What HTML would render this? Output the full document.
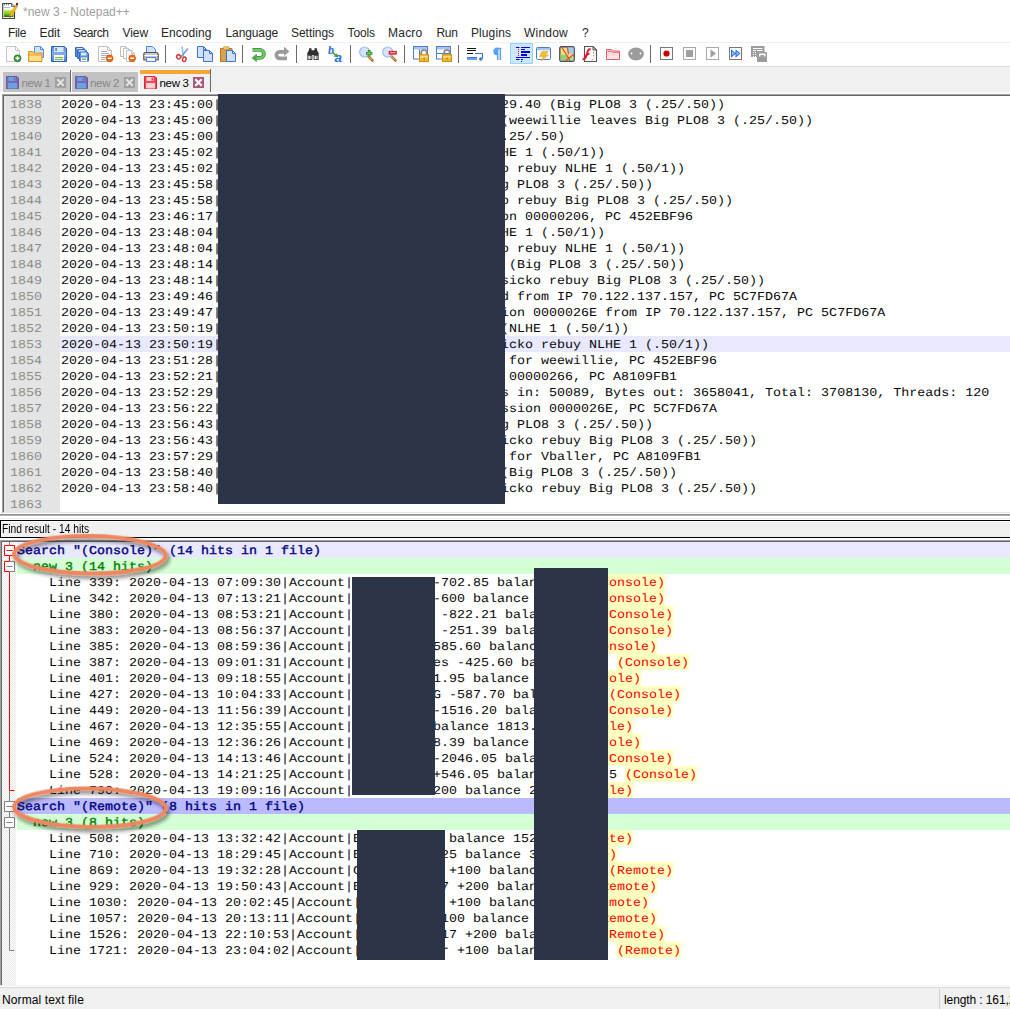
<!DOCTYPE html>
<html lang="en"><head><meta charset="utf-8"><title>*new 3 - Notepad++</title>
<style>
html,body{margin:0;padding:0;}
body{width:1010px;height:1009px;position:relative;overflow:hidden;background:#fff;font-family:"Liberation Sans",sans-serif;}
.abs{position:absolute;}
.mono{font-family:"Liberation Mono",monospace;font-size:12px;line-height:16px;white-space:pre;letter-spacing:0;text-rendering:geometricPrecision;transform:translateY(1px) scaleX(1.11111);transform-origin:0 0;}
#title{left:23px;top:4px;font-size:12px;line-height:16px;color:#a0a0a0;white-space:pre;}
.mi{top:25px;font-size:12px;line-height:16px;color:#262626;white-space:pre;}
.tab{top:72px;height:20px;background:#c2c2c2;}
.tab span{position:absolute;top:4px;font-size:11px;line-height:13px;color:#7a7a7a;white-space:pre;}
.ln{left:10px;color:#8c8c8c;}
.et{left:61px;color:#080808;}
.fl{left:17px;color:#080808;}
.hit{color:#ff0000;}
.hb{height:16px;background:#ffffbf;}
.red{background:#2b3547;}
</style></head><body>
<div class="abs" id="title">*new 3 - Notepad++</div>
<svg class="abs" style="left:0px;top:0px" width="20" height="22" viewBox="0 0 20 22"><defs><linearGradient id="tg" x1="0" y1="0" x2="0" y2="1"><stop offset="0" stop-color="#d8ec50"/><stop offset=".55" stop-color="#78c828"/><stop offset="1" stop-color="#0c6c10"/></linearGradient></defs><path d="M2.700 3.500h8.800l3 3v12h-11.800z" fill="#fff" stroke="#444" stroke-width="1.200"/><path d="M11.500 3.500v3h3" fill="#e8e8e8" stroke="#555" stroke-width=".8"/><path d="M4 4.800h1M6 4.800h1M8 4.800h1" stroke="#555" stroke-width="1"/><path d="M4 7.500h6" stroke="#9cc0e8" stroke-width="1"/><rect x="4" y="9.800" width="9.500" height="7.200" fill="url(#tg)"/><path d="M9.600 15.300l6-10.300 2 1.200-6 10.300-2.400 1.200z" fill="#f8b818" stroke="#d88c08" stroke-width=".5"/><path d="M15.500 5.700l.9-1.500 1.600 1-.9 1.500z" fill="#6c8cc0"/><rect x="16" y="3" width="2" height="2" fill="#a00010"/><path d="M9.800 15.500l-.4 2 2-1z" fill="#333"/></svg>

<div class="abs mi" style="left:8px;letter-spacing:-0.336px" id="m_File">File</div>
<div class="abs mi" style="left:39.5px;letter-spacing:-0.047px" id="m_Edit">Edit</div>
<div class="abs mi" style="left:73px;letter-spacing:-0.422px" id="m_Search">Search</div>
<div class="abs mi" style="left:122.5px;letter-spacing:-0.074px" id="m_View">View</div>
<div class="abs mi" style="left:161px;letter-spacing:0.057px" id="m_Encoding">Encoding</div>
<div class="abs mi" style="left:225.5px;letter-spacing:-0.111px" id="m_Language">Language</div>
<div class="abs mi" style="left:291px;letter-spacing:-0.045px" id="m_Settings">Settings</div>
<div class="abs mi" style="left:347.5px;letter-spacing:-0.103px" id="m_Tools">Tools</div>
<div class="abs mi" style="left:388px;letter-spacing:0.231px" id="m_Macro">Macro</div>
<div class="abs mi" style="left:436.5px;letter-spacing:-0.339px" id="m_Run">Run</div>
<div class="abs mi" style="left:471px;letter-spacing:0.092px" id="m_Plugins">Plugins</div>
<div class="abs mi" style="left:524px;letter-spacing:0.219px" id="m_Window">Window</div>
<div class="abs mi" style="left:582px;letter-spacing:-0.688px" id="m_q">?</div>
<div class="abs" style="left:0;top:42px;width:1010px;height:1px;background:#f0f0f0"></div>
<div class="abs" style="left:0;top:66px;width:1010px;height:1px;background:#dcdcdc"></div>
<div class="abs" style="left:510px;top:43px;width:21px;height:19px;background:#cce8ff;border:1px solid #99d1ff;box-sizing:content-box"></div>
<div class="abs" style="left:165px;top:45px;width:1px;height:18px;background:#6a6a6a"></div>
<div class="abs" style="left:242px;top:45px;width:1px;height:18px;background:#6a6a6a"></div>
<div class="abs" style="left:296px;top:45px;width:1px;height:18px;background:#6a6a6a"></div>
<div class="abs" style="left:350px;top:45px;width:1px;height:18px;background:#6a6a6a"></div>
<div class="abs" style="left:404px;top:45px;width:1px;height:18px;background:#6a6a6a"></div>
<div class="abs" style="left:458px;top:45px;width:1px;height:18px;background:#6a6a6a"></div>
<div class="abs" style="left:650px;top:45px;width:1px;height:18px;background:#6a6a6a"></div>
<svg class="abs" style="left:6px;top:46px" width="18" height="18" viewBox="0 0 18 18"><path d="M0.5 0.5h9l4 4v11h-13z" fill="#fdfdfd" stroke="#c4c4c4" stroke-width="1"/><path d="M9.5 0.5v4h4" fill="none" stroke="#c4c4c4" stroke-width="1"/><circle cx="11.5" cy="12.300" r="3.500" fill="#2e9a2e" stroke="#1c6e1c" stroke-width=".6"/><path d="M9.5 12.300h4M11.5 10.300v4" stroke="#fff" stroke-width="1.4"/></svg>
<svg class="abs" style="left:28px;top:46px" width="18" height="18" viewBox="0 0 18 18"><path d="M6.5 0.5h6l3 3v8h-9z" fill="#cfe2fb" stroke="#5b8fdc" stroke-width="1"/><path d="M12.5 0.5v3h3" fill="none" stroke="#5b8fdc" stroke-width="1"/><path d="M.5 15.5v-10h4.5l1.5 1.5h7.5v8.5z" fill="#f6c860" stroke="#e0922c" stroke-width="1"/><path d="M1.5 9.5h11.5v5.5h-11.5z" fill="#fbe08c"/><path d="M1 9h12.5" stroke="#e9a542" stroke-width="1"/></svg>
<svg class="abs" style="left:51px;top:46px" width="18" height="18" viewBox="0 0 18 18"><defs><linearGradient id="flg" x1="0" y1="0" x2="0" y2="1"><stop offset="0" stop-color="#5a8ee2"/><stop offset=".5" stop-color="#84aeee"/><stop offset="1" stop-color="#4a7ed8"/></linearGradient></defs><path d="M.5 .5h13l2 2v13h-15z" fill="url(#flg)" stroke="#2f5fc0" stroke-width="1"/><rect x="3" y="1" width="9.5" height="5" fill="#dbe8fb"/><rect x="4.5" y="2" width="1.2" height="3" fill="#2f5fc0"/><rect x="3" y="9" width="10" height="6" fill="#fff"/><rect x="4" y="11" width="8" height="1.2" fill="#74c044"/><rect x="4" y="13" width="8" height="1.2" fill="#74c044"/></svg>
<svg class="abs" style="left:74px;top:46px" width="18" height="18" viewBox="0 0 18 18"><g transform="translate(1 1)"><path d="M.5 .5h7.5l1.5 1.5v7.5h-9z" fill="#5b8ee0" stroke="#3a68c0" stroke-width="1"/><rect x="2" y="1" width="5.5" height="3" fill="#dbe8fb"/><rect x="2" y="6" width="6" height="3.5" fill="#fff"/><rect x="3" y="7" width="4" height="1.5" fill="#74c044"/></g><g transform="translate(3 3)"><path d="M.5 .5h7.5l1.5 1.5v7.5h-9z" fill="#5b8ee0" stroke="#3a68c0" stroke-width="1"/><rect x="2" y="1" width="5.5" height="3" fill="#dbe8fb"/><rect x="2" y="6" width="6" height="3.5" fill="#fff"/><rect x="3" y="7" width="4" height="1.5" fill="#74c044"/></g><g transform="translate(5 5.5)"><path d="M.5 .5h7.5l1.5 1.5v7.5h-9z" fill="#5b8ee0" stroke="#3a68c0" stroke-width="1"/><rect x="2" y="1" width="5.5" height="3" fill="#dbe8fb"/><rect x="2" y="6" width="6" height="3.5" fill="#fff"/><rect x="3" y="7" width="4" height="1.5" fill="#74c044"/></g></svg>
<svg class="abs" style="left:98px;top:46px" width="18" height="18" viewBox="0 0 18 18"><path d="M0.5 0.5h9l4 4v11h-13z" fill="#fdfdfd" stroke="#c0c0c0" stroke-width="1"/><path d="M9.5 0.5v4h4" fill="none" stroke="#c0c0c0" stroke-width="1"/><path d="M3 5.5h6M3 7.5h8M3 9.5h7M3 11.5h5M3 13.5h4" stroke="#b0b0b0" stroke-width="1"/><circle cx="11.6" cy="12.300" r="3.500" fill="#ee6a10" stroke="#c85000" stroke-width=".6"/><path d="M9.6 12.300h4" stroke="#fff" stroke-width="1.5"/></svg>
<svg class="abs" style="left:120px;top:46px" width="18" height="18" viewBox="0 0 18 18"><path d="M0.5 0.5h5l3 3v7h-8z" fill="#fdfdfd" stroke="#c0c0c0" stroke-width="1"/><path d="M5.5 0.5v3h3" fill="none" stroke="#c0c0c0" stroke-width="1"/><path d="M3.5 2.5h5l3 3v7h-8z" fill="#fdfdfd" stroke="#c0c0c0" stroke-width="1"/><path d="M8.5 2.5v3h3" fill="none" stroke="#c0c0c0" stroke-width="1"/><path d="M6.5 4.5h5l3 3v8h-8z" fill="#fdfdfd" stroke="#c0c0c0" stroke-width="1"/><path d="M11.5 4.5v3h3" fill="none" stroke="#c0c0c0" stroke-width="1"/><circle cx="12.2" cy="12.300" r="3.400" fill="#ee6a10" stroke="#c85000" stroke-width=".6"/><path d="M10.3 12.300h3.8" stroke="#fff" stroke-width="1.5"/></svg>
<svg class="abs" style="left:143px;top:46px" width="18" height="18" viewBox="0 0 18 18"><path d="M3.5 7v-6.5h6l3 3v3.5z" fill="#cfe2fb" stroke="#4a86e0" stroke-width="1"/><path d="M.8 14v-5.5q0-2 2-2h10.4q2 0 2 2v5.5z" fill="#c9c9c9" stroke="#555" stroke-width="1.2"/><path d="M1.5 9.5h13" stroke="#fff" stroke-width="1"/><rect x="3.5" y="11.5" width="9" height="4" fill="#fafafa" stroke="#4a86e0" stroke-width="1"/></svg>
<svg class="abs" style="left:175px;top:46px" width="18" height="18" viewBox="0 0 18 18"><path d="M7 .5l1.600 11" stroke="#9cbce8" stroke-width="1.600" fill="none"/><path d="M13 2.500l-7.500 9" stroke="#6a9cdc" stroke-width="1.500" fill="none"/><ellipse cx="3.600" cy="10.800" rx="1.900" ry="2.100" fill="none" stroke="#d23a3a" stroke-width="1.500" transform="rotate(-40 3.600 10.800)"/><ellipse cx="9.300" cy="13.300" rx="1.700" ry="2.300" fill="none" stroke="#d23a3a" stroke-width="1.500" transform="rotate(15 9.300 13.300)"/></svg>
<svg class="abs" style="left:197px;top:46px" width="18" height="18" viewBox="0 0 18 18"><path d="M0.5 0.5h6l3 3v8h-9z" fill="#cfe0fa" stroke="#3f74d4" stroke-width="1"/><path d="M6.5 0.5v3h3" fill="none" stroke="#3f74d4" stroke-width="1"/><path d="M6.5 4.5h6l3 3v8h-9z" fill="#cfe0fa" stroke="#3f74d4" stroke-width="1"/><path d="M12.5 4.5v3h3" fill="none" stroke="#3f74d4" stroke-width="1"/></svg>
<svg class="abs" style="left:220px;top:46px" width="18" height="18" viewBox="0 0 18 18"><path d="M.5 2.5h11.5v13h-11.5z" fill="#d9a050" stroke="#b87828" stroke-width="1"/><rect x="3.5" y=".8" width="5.5" height="2.6" rx=".8" fill="#f5d070" stroke="#c08830" stroke-width=".8"/><path d="M6.5 4.5h6l3 3v8h-9z" fill="#cfe0fa" stroke="#3f74d4" stroke-width="1"/><path d="M12.5 4.5v3h3" fill="none" stroke="#3f74d4" stroke-width="1"/></svg>
<svg class="abs" style="left:251px;top:46px" width="18" height="18" viewBox="0 0 18 18"><path d="M1.500 3.900h7.400a4 4 0 0 1 0 8h-3.400" fill="none" stroke="#3a9a3a" stroke-width="3.800"/><path d="M2 3.900h6.900a4 4 0 0 1 0 8h-3.400" fill="none" stroke="#76c866" stroke-width="2"/><path d="M.6 11.900l5.200-4.300v8.600z" fill="#4aa84a"/></svg>
<svg class="abs" style="left:274px;top:46px" width="18" height="18" viewBox="0 0 18 18"><path d="M10 5.800h-4.300a3.300 3.300 0 0 0 0 6.600h7.300" fill="none" stroke="#9a9a9a" stroke-width="3.800"/><path d="M15.400 5.400l-5.400-4.600v9.200z" fill="#9a9a9a"/></svg>
<svg class="abs" style="left:305px;top:46px" width="18" height="18" viewBox="0 0 18 18"><path d="M4 2.200h2.500v2h3v-2h2.500v2l1.700 2.800v7h-5v-5h-1.400v5h-5v-7l1.700-2.800z" fill="#303030"/><rect x="2.300" y="9.800" width="5" height="3.400" fill="#8c8c8c"/><rect x="8.700" y="9.800" width="5" height="3.400" fill="#8c8c8c"/><rect x="3.600" y="9.800" width="1.300" height="3.400" fill="#e8e8e8"/><rect x="10" y="9.800" width="1.300" height="3.400" fill="#e8e8e8"/></svg>
<svg class="abs" style="left:328px;top:46px" width="18" height="18" viewBox="0 0 18 18"><text x="0" y="8" font-family="Liberation Serif,serif" font-style="italic" font-weight="bold" font-size="12" fill="#2f6fdc">b</text><text x="6.500" y="15.600" font-family="Liberation Sans,sans-serif" font-style="italic" font-weight="bold" font-size="13.500" fill="#2f6fdc">a</text><path d="M4.500 6l3.500 3.500" stroke="#3ca03c" stroke-width="1.500"/><path d="M9.800 11.300l-4-.8 3.200-3.200z" fill="#3ca03c"/></svg>
<svg class="abs" style="left:359px;top:46px" width="18" height="18" viewBox="0 0 18 18"><path d="M8.5 9.500l5 5" stroke="#b07830" stroke-width="2.6" stroke-linecap="round"/><path d="M8.500 9.500l4.500 4.500" stroke="#e0b070" stroke-width="1"/><circle cx="5.700" cy="6" r="5" fill="#d4e4fa" stroke="#9cbcf0" stroke-width="1.200"/><path d="M7 7.300h6.400M10.200 4.100v6.400" stroke="#2c8c2c" stroke-width="2.800"/><path d="M7.600 7.300h5.200M10.200 4.700v5.200" stroke="#6cc45c" stroke-width="1.200"/></svg>
<svg class="abs" style="left:382px;top:46px" width="18" height="18" viewBox="0 0 18 18"><path d="M8.5 9.500l5 5" stroke="#b07830" stroke-width="2.6" stroke-linecap="round"/><path d="M8.500 9.500l4.500 4.500" stroke="#e0b070" stroke-width="1"/><circle cx="5.700" cy="6" r="5" fill="#d4e4fa" stroke="#9cbcf0" stroke-width="1.200"/><rect x="7" y="5.200" width="7.400" height="3" fill="#f02828" stroke="#c01010" stroke-width=".600"/><rect x="8" y="6.200" width="5.400" height="1" fill="#ffb0b0"/></svg>
<svg class="abs" style="left:413px;top:46px" width="18" height="18" viewBox="0 0 18 18"><rect x=".5" y=".5" width="14" height="12.500" fill="#fff" stroke="#4a7cd0" stroke-width="1"/><rect x="1" y="1" width="13" height="2.500" fill="#a8c4f0"/><path d="M6.500 3.500v9.500" stroke="#4a7cd0" stroke-width="1"/><path d="M8.300 9v-2.400a2.700 2.700 0 0 1 5.400 0v2.400" fill="none" stroke="#8c8c8c" stroke-width="1.800"/><rect x="6.500" y="8.800" width="9" height="6.700" fill="#f2b830" stroke="#d08c10" stroke-width="1"/><rect x="7.500" y="9.800" width="7" height="2" fill="#fbe08c"/><rect x="10.500" y="11.500" width="1.200" height="2" fill="#b07810"/></svg>
<svg class="abs" style="left:436px;top:46px" width="18" height="18" viewBox="0 0 18 18"><rect x=".5" y=".5" width="14" height="12.500" fill="#fff" stroke="#4a7cd0" stroke-width="1"/><rect x="1" y="1" width="13" height="2.500" fill="#a8c4f0"/><path d="M.5 7.500h14" stroke="#4a7cd0" stroke-width="1"/><path d="M8.300 9v-2.400a2.700 2.700 0 0 1 5.400 0v2.400" fill="none" stroke="#8c8c8c" stroke-width="1.800"/><rect x="6.500" y="8.800" width="9" height="6.700" fill="#f2b830" stroke="#d08c10" stroke-width="1"/><rect x="7.500" y="9.800" width="7" height="2" fill="#fbe08c"/><rect x="10.500" y="11.500" width="1.200" height="2" fill="#b07810"/></svg>
<svg class="abs" style="left:467px;top:46px" width="18" height="18" viewBox="0 0 18 18"><path d="M0 2.500h9M0 4.500h9M0 7.500h6" stroke="#111" stroke-width="1.100"/><rect x="0" y="11" width="10" height="3" fill="#6aa0ec"/><path d="M0 11.500h10" stroke="#3f74d4" stroke-width="1"/><path d="M8 7.500h7.500v5.500h-2.500" fill="none" stroke="#3f74d4" stroke-width="1.100"/><path d="M11.500 13l3-2.500v5z" fill="#3f74d4"/></svg>
<svg class="abs" style="left:490px;top:46px" width="18" height="18" viewBox="0 0 18 18"><path d="M5 2.600h6.500M7.700 2.600v11.400M10.300 2.600v11.400" stroke="#5aa2f2" stroke-width="1.500" fill="none"/><path d="M7 2.600a2.900 2.900 0 0 0 0 5.800z" fill="#5aa2f2" stroke="#5aa2f2" stroke-width="1.500"/></svg>
<svg class="abs" style="left:513px;top:46px" width="18" height="18" viewBox="0 0 18 18"><path d="M3 1.500h3.500M8 1.500h9M3 11.500h14M3 13.500h3.500M8 13.500h2" stroke="#0000e6" stroke-width="1"/><path d="M8 3.500h4" stroke="#0000e6" stroke-width="1"/><rect x="8" y="5" width="9" height="2" fill="#0000e6"/><rect x="8" y="8" width="6" height="2" fill="#0000e6"/><rect x="5" y="3" width="1" height="1" fill="#f00"/><rect x="5" y="5" width="1" height="1" fill="#f00"/><rect x="5" y="7" width="1" height="1" fill="#f00"/><rect x="5" y="9" width="1" height="1" fill="#f00"/><rect x="8" y="15" width="1" height="1" fill="#0000e6"/></svg>
<svg class="abs" style="left:536px;top:46px" width="18" height="18" viewBox="0 0 18 18"><rect x=".5" y="1.500" width="14" height="12" rx="1" fill="#f4f8ff" stroke="#4a7cd0" stroke-width="1"/><rect x="1" y="2" width="13" height="2.200" fill="#a8c4f0"/><path d="M6 5.500h6l-2.500 3.500h3l-7.500 6 2.500-4.500h-4z" fill="#f2c030" stroke="#e0a820" stroke-width=".600"/></svg>
<svg class="abs" style="left:559px;top:46px" width="18" height="18" viewBox="0 0 18 18"><rect x=".8" y=".8" width="14.400" height="14.400" rx="1.500" fill="#e8e070" stroke="#4a4a6a" stroke-width="1.400"/><rect x="8" y="1.500" width="6.500" height="6" fill="#a8c8f0"/><rect x="1.500" y="9" width="8" height="5.500" fill="#90d070"/><rect x="9.500" y="11" width="5" height="3.500" fill="#b0dc90"/><path d="M3 1.500l8 13M14.500 8.500l-7.500 6M8.500 1.500l1 6.500" stroke="#f04030" stroke-width="1.100" fill="none"/></svg>
<svg class="abs" style="left:582px;top:46px" width="18" height="18" viewBox="0 0 18 18"><path d="M2.500 .5h8.500l3.500 3.500v11.500h-12z" fill="#fdfdf8" stroke="#555" stroke-width="1.100"/><path d="M11 .5v3.500h3.500" fill="none" stroke="#555" stroke-width="1"/><path d="M11.500 6v1.500M11.500 9v1.500M11.500 12.500q-.5 1.500-2 1.500" stroke="#999" stroke-width="1" fill="none"/><path d="M8.800 3.400q-2.200-.8-3 1.800l-2 6.200q-.8 2-3.300 1.800" fill="none" stroke="#e02030" stroke-width="2"/><path d="M2 10.500l5.500-3" stroke="#e02030" stroke-width="1.500"/></svg>
<svg class="abs" style="left:606px;top:46px" width="18" height="18" viewBox="0 0 18 18"><defs><linearGradient id="fg" x1="0" y1="0" x2="0" y2="1"><stop offset="0" stop-color="#f4c4c8"/><stop offset="1" stop-color="#fdf0f0"/></linearGradient></defs><path d="M.5 13.500v-10h5l1 1.500h7v8.500z" fill="url(#fg)" stroke="#dc5c64" stroke-width="1"/><path d="M1.500 5.500h4.500l1 1h6" stroke="#e88088" stroke-width="1" fill="none"/></svg>
<svg class="abs" style="left:628px;top:46px" width="18" height="18" viewBox="0 0 18 18"><ellipse cx="8" cy="8" rx="7.900" ry="6.400" fill="#9c9c9c"/><circle cx="3.500" cy="7.500" r=".9" fill="#fff"/><circle cx="12.500" cy="7.500" r=".9" fill="#fff"/></svg>
<svg class="abs" style="left:660px;top:47px" width="18" height="18" viewBox="0 0 18 18"><rect x=".5" y=".5" width="12" height="12" fill="#fff" stroke="#777" stroke-width="1"/><circle cx="6.500" cy="6.500" r="3.100" fill="#c80000"/></svg>
<svg class="abs" style="left:683px;top:47px" width="18" height="18" viewBox="0 0 18 18"><rect x=".5" y=".5" width="12" height="12" fill="#fff" stroke="#a8a8a8" stroke-width="1"/><rect x="3" y="3" width="7" height="7" fill="#a0a0a0"/></svg>
<svg class="abs" style="left:706px;top:47px" width="18" height="18" viewBox="0 0 18 18"><rect x=".5" y=".5" width="12" height="12" fill="#fff" stroke="#a8a8a8" stroke-width="1"/><path d="M4.500 2.300l5.500 4.200-5.500 4.200z" fill="#a0a0a0"/></svg>
<svg class="abs" style="left:729px;top:47px" width="18" height="18" viewBox="0 0 18 18"><rect x=".5" y=".5" width="12" height="12" fill="#fff" stroke="#777" stroke-width="1"/><path d="M2 2.300l5 4.200-5 4.200zM6.500 2.300l5 4.200-5 4.200z" fill="#2868e0"/><path d="M3 4.300l2.700 2.200-2.700 2.200zM7.500 4.300l2.700 2.200-2.700 2.200z" fill="#8cbcfa"/></svg>
<svg class="abs" style="left:751px;top:46px" width="18" height="18" viewBox="0 0 18 18"><rect x="0" y="0" width="13.500" height="11" fill="#9c9c9c"/><rect x="6" y="6" width="10" height="10" fill="#9c9c9c"/><rect x="2" y="2" width="9.500" height="1" fill="#fff"/><rect x="2" y="4" width="3" height="1" fill="#fff"/><rect x="6" y="4" width="5.500" height="1" fill="#fff"/><rect x="2" y="6" width="1" height="1" fill="#fff"/><rect x="4" y="6" width="1" height="1" fill="#fff"/><rect x="2" y="8" width="1" height="1" fill="#fff"/><rect x="4" y="8" width="1" height="1" fill="#fff"/><rect x="2" y="10" width="1" height="1" fill="#fff"/><rect x="4" y="10" width="1" height="1" fill="#fff"/><path d="M8 7.500h6.500v3h-1.500v-1.500h-3.500v1.500h-1.500z" fill="#fff"/></svg>

<div class="abs" style="left:0;top:67px;width:1010px;height:27px;background:#f0f0f0"></div>
<div class="abs" style="left:3px;top:72px;width:67px;height:20px;background:#c2c2c2"></div>
<div class="abs" style="left:70px;top:70px;width:1px;height:22px;background:#696969"></div>
<div class="abs" style="left:3px;top:71px;width:67px;height:1px;background:#f8f8f8"></div>
<div class="abs" style="left:2px;top:71px;width:1px;height:21px;background:#f8f8f8"></div>
<div class="abs" style="left:72px;top:71px;width:66px;height:1px;background:#f8f8f8"></div>
<div class="abs" style="left:71px;top:71px;width:1px;height:21px;background:#f8f8f8"></div>
<div class="abs" style="left:138px;top:72px;width:1px;height:20px;background:#f8f8f8"></div>
<div class="abs" style="left:72px;top:72px;width:66px;height:20px;background:#c2c2c2"></div>
<div class="abs" style="left:139px;top:69px;width:71px;height:1px;background:#fbfbfb"></div>
<div class="abs" style="left:139px;top:69px;width:1px;height:23px;background:#fbfbfb"></div>
<div class="abs" style="left:140px;top:70px;width:70px;height:4px;background:#f9a436"></div>
<div class="abs" style="left:140px;top:74px;width:70px;height:19px;background:#f0f0f0"></div>
<div class="abs" style="left:210px;top:69px;width:1px;height:23px;background:#696969"></div>
<svg class="abs" style="left:6px;top:76px" width="13" height="13" viewBox="0 0 13 13"><path d="M.5 .5h10.500l1.500 1.500v10.500h-12z" fill="#7a68b4" stroke="#6c58a4" stroke-width="1"/><rect x="2.500" y="1" width="7" height="4" fill="#68a4e4"/><rect x="7.500" y="1.500" width="1.500" height="3" fill="#7a68b4"/><rect x="2" y="7" width="9" height="5.500" fill="#68a4e4"/></svg>
<svg class="abs" style="left:75px;top:76px" width="13" height="13" viewBox="0 0 13 13"><path d="M.5 .5h10.500l1.500 1.500v10.500h-12z" fill="#7a68b4" stroke="#6c58a4" stroke-width="1"/><rect x="2.500" y="1" width="7" height="4" fill="#68a4e4"/><rect x="7.500" y="1.500" width="1.500" height="3" fill="#7a68b4"/><rect x="2" y="7" width="9" height="5.500" fill="#68a4e4"/></svg>
<svg class="abs" style="left:144px;top:76px" width="13" height="13" viewBox="0 0 13 13"><path d="M.5 .5h10.500l1.500 1.500v10.500h-12z" fill="#f04858" stroke="#d02838" stroke-width="1"/><rect x="2.500" y="1" width="7" height="4" fill="#fbd0d4"/><rect x="7.500" y="1.500" width="1.500" height="3" fill="#f04858"/><rect x="2" y="7" width="9" height="5.500" fill="#fbd0d4"/></svg>
<div class="abs tabt" style="left:21.5px;top:76px;font-size:11.5px;line-height:14px;color:#868686;white-space:pre;letter-spacing:-0.3px">new 1</div>
<div class="abs tabt" style="left:90px;top:76px;font-size:11.5px;line-height:14px;color:#868686;white-space:pre;letter-spacing:-0.3px">new 2</div>
<div class="abs tabt" style="left:159.5px;top:76px;font-size:11.5px;line-height:14px;color:#000;white-space:pre;letter-spacing:-0.3px">new 3</div>
<svg class="abs" style="left:55px;top:77px" width="11" height="11" viewBox="0 0 11 11"><rect x="0" y="0" width="11" height="11" fill="#a0a0a0"/><path d="M2.300 2.300l6.400 6.400M8.700 2.300l-6.400 6.400" stroke="#e4e4e4" stroke-width="2"/></svg>
<svg class="abs" style="left:124px;top:77px" width="11" height="11" viewBox="0 0 11 11"><rect x="0" y="0" width="11" height="11" fill="#a0a0a0"/><path d="M2.300 2.300l6.400 6.400M8.700 2.300l-6.400 6.400" stroke="#e4e4e4" stroke-width="2"/></svg>
<svg class="abs" style="left:193px;top:77px" width="11" height="11" viewBox="0 0 11 11"><rect x="0" y="0" width="11" height="11" fill="#a85a7a"/><path d="M2.300 2.300l6.400 6.400M8.700 2.300l-6.400 6.400" stroke="#fff" stroke-width="2"/></svg>

<div class="abs" style="left:0;top:92px;width:1010px;height:2px;background:#fbfbfb"></div>
<div class="abs" style="left:0;top:94px;width:2px;height:420px;background:#fff"></div>
<div class="abs" style="left:2px;top:94px;width:1008px;height:419px;background:#a0a0a0"></div>
<div class="abs" style="left:3px;top:95px;width:1007px;height:418px;background:#696969"></div>
<div class="abs" style="left:4px;top:96px;width:1006px;height:416px;background:#fff"></div>
<div class="abs" style="left:4px;top:96px;width:56px;height:416px;background:#e4e4e4"></div>
<div class="abs" style="left:3px;top:512px;width:1007px;height:1px;background:#e3e3e3"></div>
<div class="abs" style="left:2px;top:513px;width:1008px;height:1px;background:#fff"></div>
<div class="abs" style="left:60px;top:336px;width:950px;height:16px;background:#e8e8ff"></div>
<div class="abs mono ln" style="top:96px">1838</div><div class="abs mono et" style="top:96px">2020-04-13 23:45:00|                                   29.40 (Big PLO8 3 (.25/.50))</div>
<div class="abs mono ln" style="top:112px">1839</div><div class="abs mono et" style="top:112px">2020-04-13 23:45:00|                                   (weewillie leaves Big PLO8 3 (.25/.50))</div>
<div class="abs mono ln" style="top:128px">1840</div><div class="abs mono et" style="top:128px">2020-04-13 23:45:00|                                   .25/.50)</div>
<div class="abs mono ln" style="top:144px">1841</div><div class="abs mono et" style="top:144px">2020-04-13 23:45:02|                                   HE 1 (.50/1))</div>
<div class="abs mono ln" style="top:160px">1842</div><div class="abs mono et" style="top:160px">2020-04-13 23:45:02|                                   o rebuy NLHE 1 (.50/1))</div>
<div class="abs mono ln" style="top:176px">1843</div><div class="abs mono et" style="top:176px">2020-04-13 23:45:58|                                   g PLO8 3 (.25/.50))</div>
<div class="abs mono ln" style="top:192px">1844</div><div class="abs mono et" style="top:192px">2020-04-13 23:45:58|                                   o rebuy Big PLO8 3 (.25/.50))</div>
<div class="abs mono ln" style="top:208px">1845</div><div class="abs mono et" style="top:208px">2020-04-13 23:46:17|                                   on 00000206, PC 452EBF96</div>
<div class="abs mono ln" style="top:224px">1846</div><div class="abs mono et" style="top:224px">2020-04-13 23:48:04|                                   HE 1 (.50/1))</div>
<div class="abs mono ln" style="top:240px">1847</div><div class="abs mono et" style="top:240px">2020-04-13 23:48:04|                                   o rebuy NLHE 1 (.50/1))</div>
<div class="abs mono ln" style="top:256px">1848</div><div class="abs mono et" style="top:256px">2020-04-13 23:48:14|                                    (Big PLO8 3 (.25/.50))</div>
<div class="abs mono ln" style="top:272px">1849</div><div class="abs mono et" style="top:272px">2020-04-13 23:48:14|                                   sicko rebuy Big PLO8 3 (.25/.50))</div>
<div class="abs mono ln" style="top:288px">1850</div><div class="abs mono et" style="top:288px">2020-04-13 23:49:46|                                   d from IP 70.122.137.157, PC 5C7FD67A</div>
<div class="abs mono ln" style="top:304px">1851</div><div class="abs mono et" style="top:304px">2020-04-13 23:49:47|                                   ion 0000026E from IP 70.122.137.157, PC 5C7FD67A</div>
<div class="abs mono ln" style="top:320px">1852</div><div class="abs mono et" style="top:320px">2020-04-13 23:50:19|                                   (NLHE 1 (.50/1))</div>
<div class="abs mono ln" style="top:336px">1853</div><div class="abs mono et" style="top:336px">2020-04-13 23:50:19|                                   icko rebuy NLHE 1 (.50/1))</div>
<div class="abs mono ln" style="top:352px">1854</div><div class="abs mono et" style="top:352px">2020-04-13 23:51:28|                                    for weewillie, PC 452EBF96</div>
<div class="abs mono ln" style="top:368px">1855</div><div class="abs mono et" style="top:368px">2020-04-13 23:52:21|                                    00000266, PC A8109FB1</div>
<div class="abs mono ln" style="top:384px">1856</div><div class="abs mono et" style="top:384px">2020-04-13 23:52:29|                                   s in: 50089, Bytes out: 3658041, Total: 3708130, Threads: 120</div>
<div class="abs mono ln" style="top:400px">1857</div><div class="abs mono et" style="top:400px">2020-04-13 23:56:22|                                   ssion 0000026E, PC 5C7FD67A</div>
<div class="abs mono ln" style="top:416px">1858</div><div class="abs mono et" style="top:416px">2020-04-13 23:56:43|                                   g PLO8 3 (.25/.50))</div>
<div class="abs mono ln" style="top:432px">1859</div><div class="abs mono et" style="top:432px">2020-04-13 23:56:43|                                   icko rebuy Big PLO8 3 (.25/.50))</div>
<div class="abs mono ln" style="top:448px">1860</div><div class="abs mono et" style="top:448px">2020-04-13 23:57:29|                                    for Vballer, PC A8109FB1</div>
<div class="abs mono ln" style="top:464px">1861</div><div class="abs mono et" style="top:464px">2020-04-13 23:58:40|                                   (Big PLO8 3 (.25/.50))</div>
<div class="abs mono ln" style="top:480px">1862</div><div class="abs mono et" style="top:480px">2020-04-13 23:58:40|                                   icko rebuy Big PLO8 3 (.25/.50))</div>
<div class="abs mono ln" style="top:496px">1863</div>
<div class="abs red" style="left:218px;top:94px;width:287px;height:410px"></div>
<div class="abs" style="left:0;top:514px;width:1010px;height:1px;background:#8c8c8c"></div>
<div class="abs" style="left:0;top:515px;width:1010px;height:1px;background:#b4b4b4"></div>
<div class="abs" style="left:0;top:516px;width:1010px;height:2px;background:#fdfdfd"></div>
<div class="abs" style="left:0;top:518px;width:1010px;height:1px;background:#f0f0f0"></div>
<div class="abs" style="left:0;top:519px;width:1010px;height:1px;background:#fff"></div>
<div class="abs" style="left:0;top:520px;width:1012px;height:16px;background:#f0f0f0;border:1px solid #000;box-sizing:content-box"></div>
<div class="abs" style="left:1px;top:521px;width:1009px;height:1px;background:#fff"></div>
<div class="abs" style="left:1px;top:521px;width:1px;height:16px;background:#fff"></div>
<div class="abs" id="frcap" style="left:1.5px;top:521px;font-size:12px;line-height:16px;color:#000;white-space:pre;transform:scaleX(.855);transform-origin:0 0">Find result - 14 hits</div>
<div class="abs" style="left:0;top:538px;width:1010px;height:2px;background:#fff"></div>
<div class="abs" style="left:0;top:540px;width:1010px;height:1px;background:#a0a0a0"></div>
<div class="abs" style="left:0;top:541px;width:1010px;height:1px;background:#696969"></div>
<div class="abs" style="left:0;top:540px;width:1px;height:445px;background:#a0a0a0"></div>
<div class="abs" style="left:1px;top:541px;width:1px;height:444px;background:#696969"></div>
<div class="abs" style="left:2px;top:542px;width:14px;height:443px;background:#f4f4f4"></div>
<div class="abs" style="left:17px;top:542px;width:993px;height:16px;background:#e8e8ff"></div>
<div class="abs mono fl" style="top:542px;color:#000080;-webkit-text-stroke:.35px #000080">Search "(Console)" (14 hits in 1 file)</div>
<div class="abs" style="left:17px;top:558px;width:993px;height:16px;background:#d5ffd5"></div>
<div class="abs mono fl" style="top:558px;color:#008000;-webkit-text-stroke:.35px #008000">  new 3 (14 hits)</div>
<div class="abs hb" style="left:593px;top:574px;width:72px"></div><div class="abs mono fl" style="top:574px">    Line 339: 2020-04-13 07:09:30|Account|          -702.85 balan       <span class="hit">(Console)</span></div>
<div class="abs hb" style="left:593px;top:590px;width:72px"></div><div class="abs mono fl" style="top:590px">    Line 342: 2020-04-13 07:13:21|Account|          -600 balance        <span class="hit">(Console)</span></div>
<div class="abs hb" style="left:601px;top:606px;width:72px"></div><div class="abs mono fl" style="top:606px">    Line 380: 2020-04-13 08:53:21|Account|           -822.21 bala        <span class="hit">(Console)</span></div>
<div class="abs hb" style="left:601px;top:622px;width:72px"></div><div class="abs mono fl" style="top:622px">    Line 383: 2020-04-13 08:56:37|Account|           -251.39 bala        <span class="hit">(Console)</span></div>
<div class="abs hb" style="left:585px;top:638px;width:72px"></div><div class="abs mono fl" style="top:638px">    Line 385: 2020-04-13 08:59:36|Account|          585.60 balanc      <span class="hit">(Console)</span></div>
<div class="abs hb" style="left:617px;top:654px;width:72px"></div><div class="abs mono fl" style="top:654px">    Line 387: 2020-04-13 09:01:31|Account|          es -425.60 ba          <span class="hit">(Console)</span></div>
<div class="abs hb" style="left:569px;top:670px;width:72px"></div><div class="abs mono fl" style="top:670px">    Line 401: 2020-04-13 09:18:55|Account|          1.95 balance     <span class="hit">(Console)</span></div>
<div class="abs hb" style="left:609px;top:686px;width:72px"></div><div class="abs mono fl" style="top:686px">    Line 427: 2020-04-13 10:04:33|Account|          G -587.70 bal         <span class="hit">(Console)</span></div>
<div class="abs hb" style="left:601px;top:702px;width:72px"></div><div class="abs mono fl" style="top:702px">    Line 449: 2020-04-13 11:56:39|Account|          -1516.20 bala        <span class="hit">(Console)</span></div>
<div class="abs hb" style="left:561px;top:718px;width:72px"></div><div class="abs mono fl" style="top:718px">    Line 467: 2020-04-13 12:35:55|Account|          balance 1813.   <span class="hit">(Console)</span></div>
<div class="abs hb" style="left:569px;top:734px;width:72px"></div><div class="abs mono fl" style="top:734px">    Line 469: 2020-04-13 12:36:26|Account|          8.39 balance     <span class="hit">(Console)</span></div>
<div class="abs hb" style="left:601px;top:750px;width:72px"></div><div class="abs mono fl" style="top:750px">    Line 524: 2020-04-13 14:13:46|Account|          -2046.05 bala        <span class="hit">(Console)</span></div>
<div class="abs hb" style="left:625px;top:766px;width:72px"></div><div class="abs mono fl" style="top:766px">    Line 528: 2020-04-13 14:21:25|Account|          +546.05 balan         5 <span class="hit">(Console)</span></div>
<div class="abs hb" style="left:561px;top:782px;width:72px"></div><div class="abs mono fl" style="top:782px">    Line 790: 2020-04-13 19:09:16|Account|          200 balance 2   <span class="hit">(Console)</span></div>
<div class="abs" style="left:17px;top:798px;width:993px;height:16px;background:#babafe"></div>
<div class="abs mono fl" style="top:798px;color:#000080;-webkit-text-stroke:.35px #000080">Search "(Remote)" (8 hits in 1 file)</div>
<div class="abs" style="left:17px;top:814px;width:993px;height:16px;background:#d5ffd5"></div>
<div class="abs mono fl" style="top:814px;color:#008000;-webkit-text-stroke:.35px #008000">  new 3 (8 hits)</div>
<div class="abs hb" style="left:569px;top:830px;width:64px"></div><div class="abs mono fl" style="top:830px">    Line 508: 2020-04-13 13:32:42|Account|B           balance 152    <span class="hit">(Remote)</span></div>
<div class="abs hb" style="left:553px;top:846px;width:64px"></div><div class="abs mono fl" style="top:846px">    Line 710: 2020-04-13 18:29:45|Account|B          25 balance 3  <span class="hit">(Remote)</span></div>
<div class="abs hb" style="left:609px;top:862px;width:64px"></div><div class="abs mono fl" style="top:862px">    Line 869: 2020-04-13 19:32:28|Account|C           +100 balanc         <span class="hit">(Remote)</span></div>
<div class="abs hb" style="left:593px;top:878px;width:64px"></div><div class="abs mono fl" style="top:878px">    Line 929: 2020-04-13 19:50:43|Account|B          7 +200 balan       <span class="hit">(Remote)</span></div>
<div class="abs hb" style="left:585px;top:894px;width:64px"></div><div class="abs mono fl" style="top:894px">    Line 1030: 2020-04-13 20:02:45|Account|           +100 balanc      <span class="hit">(Remote)</span></div>
<div class="abs hb" style="left:593px;top:910px;width:64px"></div><div class="abs mono fl" style="top:910px">    Line 1057: 2020-04-13 20:13:11|Account|          100 balance        <span class="hit">(Remote)</span></div>
<div class="abs hb" style="left:601px;top:926px;width:64px"></div><div class="abs mono fl" style="top:926px">    Line 1526: 2020-04-13 22:10:53|Account|          17 +200 bala        <span class="hit">(Remote)</span></div>
<div class="abs hb" style="left:617px;top:942px;width:64px"></div><div class="abs mono fl" style="top:942px">    Line 1721: 2020-04-13 23:04:02|Account|          r +100 balan          <span class="hit">(Remote)</span></div>
<svg class="abs" style="left:2px;top:542px" width="14" height="443"><defs><pattern id="ck" width="2" height="2" patternUnits="userSpaceOnUse"><rect width="2" height="2" fill="#fff"/><rect width="1" height="1" fill="#e6e6e6"/><rect x="1" y="1" width="1" height="1" fill="#e6e6e6"/></pattern></defs><rect width="14" height="443" fill="url(#ck)"/></svg>
<svg class="abs" style="left:0px;top:540px" width="20" height="445" viewBox="0 540 20 445"><path d="M9.5 542V545" stroke="#808080" stroke-width="1"/><path d="M9.5 556V561M9.5 572V790.5H14.5" stroke="#ff0000" stroke-width="1" fill="none"/><rect x="4.5" y="545.5" width="10" height="10" fill="#fff"/><path d="M9.5 555.5H4.5V545.5H9.5" fill="none" stroke="#ff0000" stroke-width="1"/><path d="M9.5 545.5H14.5V555.5H9.5" fill="none" stroke="#ff0000" stroke-width="1"/><path d="M6.500 550.5H12.500" stroke="#ff0000" stroke-width="1"/><rect x="4.5" y="561.5" width="10" height="10" fill="#fff"/><path d="M9.5 571.5H4.5V561.5H9.5" fill="none" stroke="#ff0000" stroke-width="1"/><path d="M9.5 561.5H14.5V571.5H9.5" fill="none" stroke="#808080" stroke-width="1"/><path d="M6.500 566.5H12.500" stroke="#808080" stroke-width="1"/><path d="M9.5 791V801M9.5 812V817M9.5 828V950.5H14.5" stroke="#808080" stroke-width="1" fill="none"/><rect x="4.5" y="801.5" width="10" height="10" fill="#fff"/><path d="M9.5 811.5H4.5V801.5H9.5" fill="none" stroke="#808080" stroke-width="1"/><path d="M9.5 801.5H14.5V811.5H9.5" fill="none" stroke="#808080" stroke-width="1"/><path d="M6.500 806.5H12.500" stroke="#808080" stroke-width="1"/><rect x="4.5" y="817.5" width="10" height="10" fill="#fff"/><path d="M9.5 827.5H4.5V817.5H9.5" fill="none" stroke="#808080" stroke-width="1"/><path d="M9.5 817.5H14.5V827.5H9.5" fill="none" stroke="#808080" stroke-width="1"/><path d="M6.500 822.5H12.500" stroke="#808080" stroke-width="1"/></svg>

<div class="abs red" style="left:352px;top:577px;width:83px;height:218px"></div>
<div class="abs red" style="left:534px;top:568px;width:74px;height:392px"></div>
<div class="abs red" style="left:357px;top:830px;width:88px;height:130px"></div>
<svg class="abs" style="left:0;top:520px" width="200" height="330" viewBox="0 520 200 330"><defs><filter id="ds" x="-10%" y="-30%" width="125%" height="170%"><feGaussianBlur in="SourceAlpha" stdDeviation="2"/><feOffset dx="2" dy="3"/><feComponentTransfer><feFuncA type="linear" slope=".55"/></feComponentTransfer><feMerge><feMergeNode/><feMergeNode in="SourceGraphic"/></feMerge></filter></defs><ellipse cx="89.9" cy="554.800" rx="75.800" ry="18.700" fill="none" stroke="#ee8660" stroke-width="4" filter="url(#ds)" transform="rotate(.6 89.900 554.800)"/><ellipse cx="89.9" cy="807.700" rx="75.800" ry="19.200" fill="none" stroke="#ee8660" stroke-width="4" filter="url(#ds)" transform="rotate(.6 89.900 807.700)"/></svg>
<div class="abs" style="left:0;top:985px;width:1010px;height:1px;background:#f0f0f0"></div>
<div class="abs" style="left:0;top:986px;width:1010px;height:1px;background:#fff"></div>
<div class="abs" style="left:0;top:987px;width:1010px;height:22px;background:#f0f0f0"></div>
<div class="abs" style="left:0;top:987px;width:1010px;height:1px;background:#d9d9d9"></div>
<div class="abs" style="left:939px;top:989px;width:1px;height:20px;background:#d0d0d0"></div>
<div class="abs" id="st1" style="left:2px;top:992px;font-size:12px;line-height:16px;color:#000;white-space:pre;letter-spacing:.12px">Normal text file</div>
<div class="abs" id="st2" style="left:944px;top:992px;font-size:12px;line-height:16px;color:#000;white-space:pre;letter-spacing:-.1px">length : 161,2</div>
</body></html>
